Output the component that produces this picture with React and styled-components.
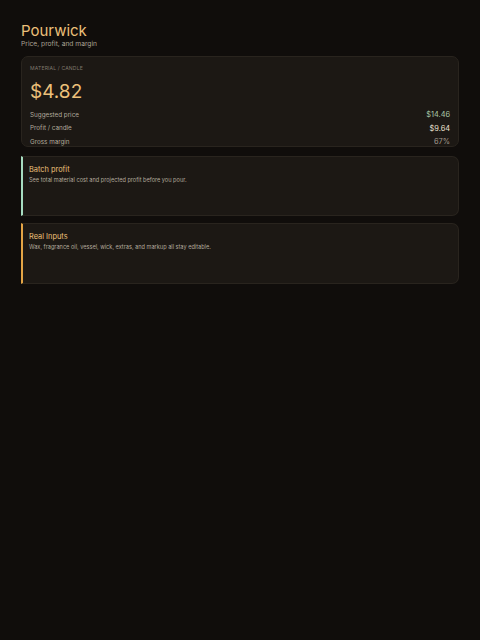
import React from 'react'
import styled, { createGlobalStyle } from 'styled-components'

const Global = createGlobalStyle`
  html, body {
    margin: 0;
    padding: 0;
    background: #100d0b;
  }
  body {
    font-family: Inter, "Noto Sans", sans-serif;
    -webkit-font-smoothing: antialiased;
  }
`

const Page = styled.div`
  min-height: 640px;
  padding: 22px 21px 0 21px;
  box-sizing: border-box;
  background: #100d0b;
`

const Title = styled.h1`
  margin: 0;
  font-size: 15px;
  font-weight: 400;
  line-height: 18px;
  color: #ecc07a;
`

const Subtitle = styled.div`
  font-size: 6.7px;
  line-height: 9px;
  color: #aba395;
`

const Stack = styled.div`
  display: flex;
  flex-direction: column;
  gap: 7px;
  margin-top: 7px;
`

const Card = styled.div`
  background: #1c1814;
  border: 1px solid #29241e;
  border-radius: 7px;
  box-sizing: border-box;
  padding: 8px 8px 0 8px;
  height: ${p => p.h}px;
  margin-bottom: ${p => p.mb || 0}px;
  ${p => p.accent && `
    border-left: 2px solid ${p.accent};
    border-radius: 0 7px 7px 0;
    padding-left: 6px;
  `}
`

const Label = styled.div`
  font-size: 5.1px;
  letter-spacing: 0.15px;
  color: #7f776c;
  text-transform: uppercase;
  line-height: 7px;
`

const Big = styled.div`
  font-size: 19px;
  line-height: 24px;
  color: #ecc07a;
  margin-top: 8px;
  margin-bottom: 4px;
`

const Row = styled.div`
  display: flex;
  justify-content: space-between;
  align-items: center;
  height: 13.5px;
`

const RowLabel = styled.span`
  font-size: 6.3px;
  color: #b3aa9c;
`

const RowValue = styled.span`
  font-size: 7.4px;
  color: ${p => p.c};
`

const CardTitle = styled.div`
  font-size: 7.4px;
  line-height: 10px;
  color: #ecc07a;
`

const CardText = styled.div`
  font-size: 5.6px;
  line-height: 7px;
  color: #b3aa9c;
  margin-top: 2px;
`

export default function App() {
  return (
    <Page>
      <Global />
      <Title>Pourwick</Title>
      <Subtitle>Price, profit, and margin</Subtitle>
      <Stack>
        <Card h={91} mb={2}>
          <Label>Material / Candle</Label>
          <Big>$4.82</Big>
          <Row>
            <RowLabel>Suggested price</RowLabel>
            <RowValue c="#a9c7a6">$14.46</RowValue>
          </Row>
          <Row>
            <RowLabel>Profit / candle</RowLabel>
            <RowValue c="#ece2d2">$9.64</RowValue>
          </Row>
          <Row>
            <RowLabel>Gross margin</RowLabel>
            <RowValue c="#a39a8e">67%</RowValue>
          </Row>
        </Card>
        <Card h={60} accent="#a6dcc0">
          <CardTitle>Batch profit</CardTitle>
          <CardText>See total material cost and projected profit before you pour.</CardText>
        </Card>
        <Card h={61} accent="#e3a445">
          <CardTitle>Real Inputs</CardTitle>
          <CardText>Wax, fragrance oil, vessel, wick, extras, and markup all stay editable.</CardText>
        </Card>
      </Stack>
    </Page>
  )
}
